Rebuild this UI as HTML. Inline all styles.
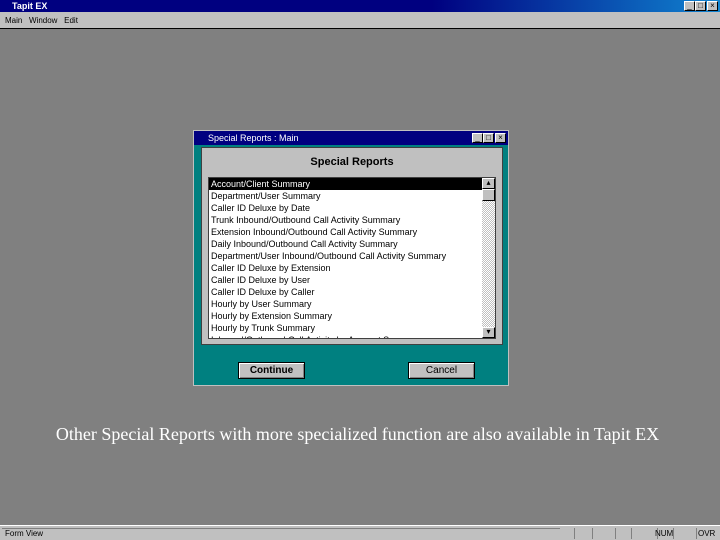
<!DOCTYPE html><html><head><style>
body{margin:0;width:720px;height:540px;background:#808080;position:relative;overflow:hidden;font-family:"Liberation Sans",sans-serif}
div{position:absolute;box-sizing:border-box}
.t{font-size:9px;color:#000;white-space:nowrap}
.btn{background:#c0c0c0;border:1px solid #000;box-shadow:inset 1px 1px #fff,inset -1px -1px #808080;font-size:10px;font-weight:bold;text-align:center;line-height:15px}
.wb{width:11px;height:10px;background:#c0c0c0;border:1px solid;border-color:#fff #000 #000 #fff;font-size:8px;line-height:8px;text-align:center}
.sp{top:528px;height:11px;border-left:1px solid #808080}
</style></head><body>
<div style="left:0;top:0;width:720px;height:12px;background:linear-gradient(90deg,#000080 60%,#1084d0)"></div>
<div class="t" style="left:12px;top:0;color:#fff;font-weight:bold;font-size:9px;line-height:12px">Tapit EX</div>
<div class="wb" style="left:684px;top:1px">_</div><div class="wb" style="left:695px;top:1px">□</div><div class="wb" style="left:707px;top:1px">×</div>
<div style="left:0;top:12px;width:720px;height:17px;background:#c0c0c0;border-bottom:1px solid #000"></div>
<div class="t" style="left:5px;top:16px;font-size:8px">Main &nbsp; Window &nbsp; Edit</div>
<div style="left:0;top:525px;width:720px;height:15px;background:#c0c0c0;border-top:1px solid #fff"></div>
<div style="left:2px;top:528px;width:558px;height:1px;background:#808080"></div>
<div class="sp" style="left:574px"></div><div class="sp" style="left:592px"></div><div class="sp" style="left:615px"></div><div class="sp" style="left:631px"></div><div class="sp" style="left:657px"></div><div class="sp" style="left:673px"></div><div class="sp" style="left:696px"></div>
<div class="t" style="left:5px;top:529px;font-size:8px">Form View</div>
<div class="t" style="left:655px;top:529px;font-size:8px">NUM</div>
<div class="t" style="left:698px;top:529px;font-size:8px">OVR</div>

<div style="left:193px;top:130px;width:316px;height:256px;background:#008080;border:1px solid #c0c0c0"></div>
<div style="left:194px;top:131px;width:314px;height:14px;background:#000080"></div>
<div class="t" style="left:208px;top:133px;color:#fff">Special Reports : Main</div>
<div class="wb" style="left:472px;top:133px">_</div><div class="wb" style="left:483px;top:133px">□</div><div class="wb" style="left:495px;top:133px">×</div>
<div style="left:201px;top:147px;width:302px;height:198px;background:#c0c0c0;border:1px solid #404040"></div>
<div style="left:201px;top:156px;width:302px;text-align:center;font-size:11px;font-weight:bold">Special Reports</div>
<div style="left:208px;top:177px;width:288px;height:162px;background:#fff;border:1px solid #404040;overflow:hidden"></div>
<div style="left:209px;top:178px;width:273px;height:12px;background:#000"></div>
<div style="left:482px;top:178px;width:13px;height:160px;background:repeating-conic-gradient(#c0c0c0 0 25%,#fff 0 50%) 0 0/2px 2px"></div>
<div class="wb" style="left:482px;top:178px;width:13px;height:11px">▴</div>
<div class="wb" style="left:482px;top:189px;width:13px;height:12px"></div>
<div class="wb" style="left:482px;top:327px;width:13px;height:11px">▾</div>
<div class="t" style="left:211px;top:178px;line-height:12px;height:160px;overflow:hidden">
<span style="color:#fff">Account/Client Summary</span><br>Department/User Summary<br>Caller ID Deluxe by Date<br>Trunk Inbound/Outbound Call Activity Summary<br>Extension Inbound/Outbound Call Activity Summary<br>Daily Inbound/Outbound Call Activity Summary<br>Department/User Inbound/Outbound Call Activity Summary<br>Caller ID Deluxe by Extension<br>Caller ID Deluxe by User<br>Caller ID Deluxe by Caller<br>Hourly by User Summary<br>Hourly by Extension Summary<br>Hourly by Trunk Summary<br>Inbound/Outbound Call Activity by Account Summary</div>
<div class="btn" style="left:238px;top:362px;width:67px;height:17px">Continue</div>
<div class="btn" style="left:408px;top:362px;width:67px;height:17px;font-weight:normal">Cancel</div>
<div style="left:0;top:424px;width:715px;text-align:center;font-family:'Liberation Serif',serif;font-size:18px;color:#fff;white-space:nowrap">Other Special Reports with more specialized function are also available in Tapit EX</div>
</body></html>
